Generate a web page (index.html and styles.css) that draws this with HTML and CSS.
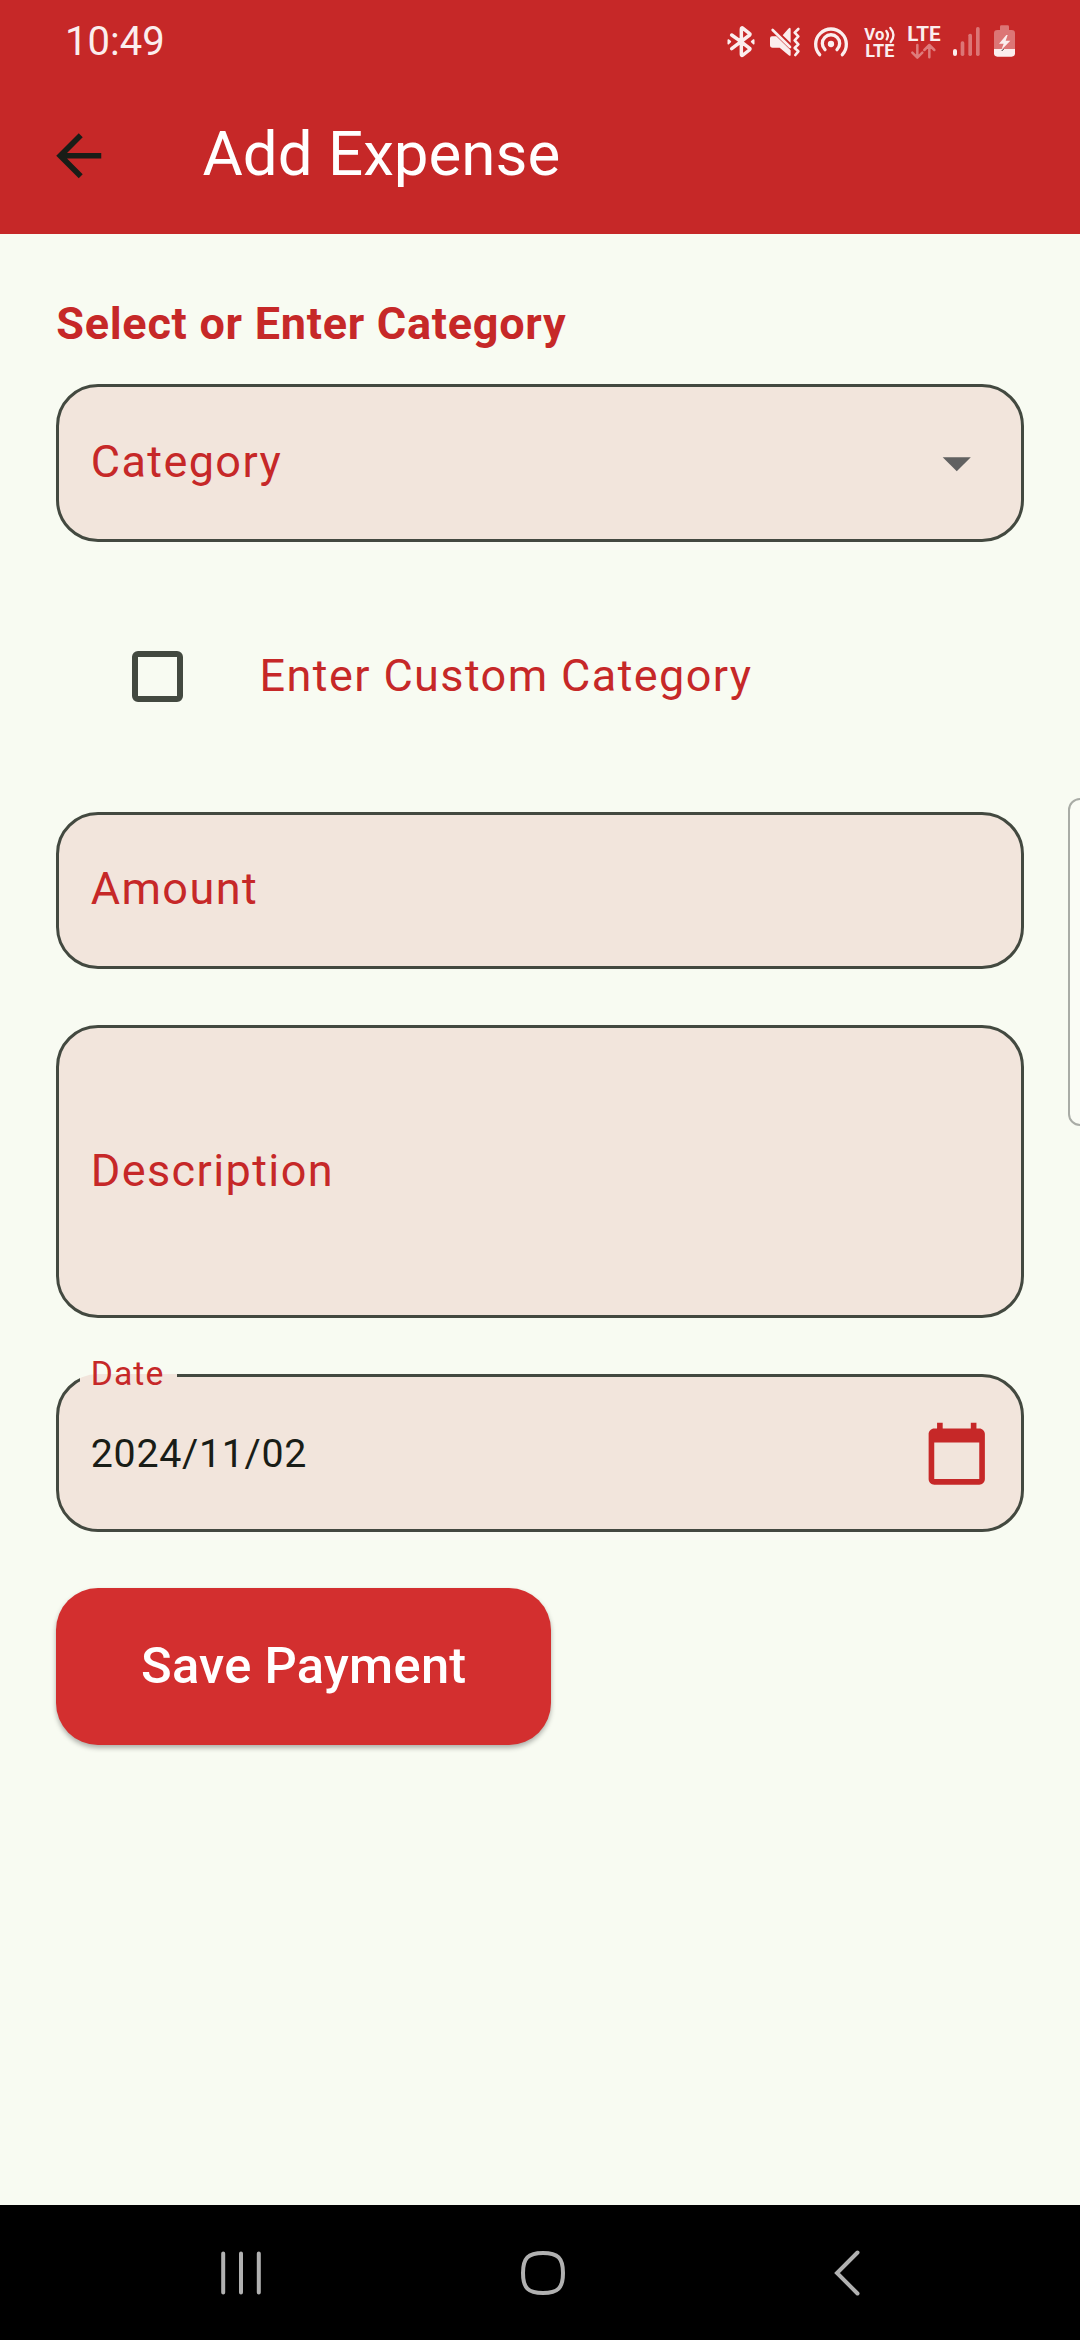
FILE: index.html
```html
<!DOCTYPE html>
<html lang="en">
<head>
<meta charset="utf-8">
<title>Add Expense</title>
<link rel="stylesheet" href="styles.css">
</head>
<body>
<div class="screen">
  <header class="top">
    <div class="status">
      <span class="clock">10:49</span>
      <div class="status-icons">
        <svg width="42" height="65" viewBox="30 0 126 195" fill="none" stroke="#fbeeee" stroke-width="10.500" stroke-linecap="round" stroke-linejoin="round"><path d="M65 75L93 95L65 116M93 95L119 115Q121 117 118 120L99 135Q94 139 94 133V58Q94 51 99 55L118 70Q121 72 119 75Z"/><path d="M55 90L61 95L55 101ZM131 90L125 95L131 101Z" stroke-width="5" fill="#fbeeee"/></svg>
        <svg width="45" height="65" viewBox="156 0 135 195" fill="#fbeeee"><path d="M180 85Q180 79 186 79H199L242 121V134Q242 140 236 136L209 113H188Q180 113 180 105ZM218 76L235 56Q242 49 242 58V99Z"/><path d="M188 60L240 111M265 57L254 68L265 79L254 91L265 103L254 114L265 124L256 135" fill="none" stroke="#fbeeee" stroke-width="8" stroke-linecap="round" stroke-linejoin="round"/></svg>
        <svg width="49" height="65" viewBox="291 0 147 195" fill="none" stroke="#fbeeee" stroke-width="10" stroke-linecap="round"><path d="M329 134A46 46 0 1 1 397 134M345 119A26 26 0 1 1 381 119"/><circle cx="363" cy="102" r="9.500" fill="#fbeeee" stroke="none"/></svg>
        <svg width="45" height="65" viewBox="438 0 135 195"><g class="signal-text"><text x="463" y="90" font-size="51" textLength="60" lengthAdjust="spacingAndGlyphs">Vo</text><text x="466" y="141" font-size="53" textLength="87" lengthAdjust="spacingAndGlyphs">LTE</text></g><path d="M529 63Q538 75 530 88M541 54Q559 75 542 96" fill="none" stroke="#fbeeee" stroke-width="7" stroke-linecap="round"/></svg>
        <svg width="46" height="65" viewBox="573 0 138 195"><text class="signal-text" x="592" y="93" font-size="62" textLength="100" lengthAdjust="spacingAndGlyphs">LTE</text><path d="M622 105V142M607 128L622 143L637 128M658 142V105M643 120L658 105L673 120" fill="none" stroke="#de7c7c" stroke-width="7.500" stroke-linecap="round" stroke-linejoin="round"/></svg>
        <svg width="40" height="65" viewBox="711 0 120 195" fill="#dc7676"><rect x="729" y="117" width="12" height="21" rx="6" fill="#fbeeee"/><rect x="752" y="94" width="11" height="44" rx="5"/><rect x="775" y="71" width="11" height="67" rx="5"/><rect x="798" y="51" width="11" height="87" rx="5"/></svg>
        <svg width="40" height="65" viewBox="831 0 120 195"><path d="M862 60H870V50Q870 46 874 46H893Q897 46 897 50V60H905Q915 60 915 70V118H852V70Q852 60 862 60Z" fill="#dc7676"/><path d="M852 117H915V130Q915 140 905 140H862Q852 140 852 130Z" fill="#fbeeee"/><path d="M889 75L867 101H881L874 120L901 92H887L893 75Z" fill="#fbeeee"/><path d="M881 117L875 123" stroke="#333" stroke-width="3"/></svg>
      </div>
    </div>
    <div class="app-bar">
      <svg class="icon" viewBox="0 0 24 24" fill="#191d17"><path d="M20 11H7.830l5.590-5.590L12 4l-8 8 8 8 1.410-1.410L7.830 13H20z"/></svg>
      <h1 class="title">Add Expense</h1>
    </div>
  </header>

  <main class="form">
    <h2 class="section-title">Select or Enter Category</h2>
    <div class="field">
      <span class="label">Category</span>
      <svg class="icon" viewBox="0 0 24 24" fill="#616161"><path d="M7 10l5 5 5-5z"/></svg>
    </div>
    <div class="check-row">
      <span class="checkbox"></span>
      <span class="label">Enter Custom Category</span>
    </div>
    <div class="field"><span class="label">Amount</span></div>
    <div class="field field-tall"><span class="label">Description</span></div>
    <fieldset class="date-field">
      <legend class="date-label"><span class="date-label-text">Date</span></legend>
      <div class="date-row">
        <span class="date-value">2024/11/02</span>
        <svg class="icon" viewBox="0 0 24 24" fill="#c62828"><path d="M20 3h-1V1h-2v2H7V1H5v2H4c-1.100 0-2 .9-2 2v16c0 1.100.9 2 2 2h16c1.100 0 2-.9 2-2V5c0-1.100-.9-2-2-2zm0 18H4V8h16z"/></svg>
      </div>
    </fieldset>
    <button class="save" type="button">Save Payment</button>
  </main>

  <nav class="nav-bar">
    <svg width="44" height="50" viewBox="0 0 44 50" stroke="#b1b1b1" stroke-width="4" stroke-linecap="round"><path d="M4.200 5.500V44.500M22 5.500V44.500M39.800 5.500V44.500"/></svg>
    <svg class="home" width="50" height="50" viewBox="0 0 50 50" fill="none" stroke="#b1b1b1" stroke-width="4"><path d="M25 5C40 5 45 10 45 25S40 45 25 45 5 40 5 25 10 5 25 5Z"/></svg>
    <svg width="36" height="50" viewBox="0 0 36 50" fill="none" stroke="#b1b1b1" stroke-width="4" stroke-linecap="round"><path d="M25.500 4.500L5 25L25.500 45.500"/></svg>
  </nav>
  <div class="edge-handle"></div>
</div>
</body>
</html>
```
FILE: styles.css
```css
* { box-sizing: border-box; }

body { margin: 0; }

.screen {
  position: relative;
  display: flex;
  flex-direction: column;
  width: 1080px;
  height: 2340px;
  overflow: hidden;
  background: #f8fbf2;
  font-family: Roboto, sans-serif;
}

.top {
  height: 234.4px;
  flex: none;
  background: #c62828;
}

.status {
  display: flex;
  justify-content: space-between;
  height: 78px;
  padding: 10px 53px 0 65px;
}

.clock {
  font-size: 40px;
  line-height: 64px;
  color: #fbeeee;
}

.status-icons { display: flex; }

.signal-text {
  font-family: Roboto, sans-serif;
  font-weight: 700;
  fill: #fbeeee;
}

.app-bar {
  display: flex;
  align-items: center;
  gap: 90px;
  height: 156.4px;
  padding-left: 45px;
}

.icon {
  flex: none;
  width: 67.5px;
  height: 67.5px;
}

.title {
  margin: 0 0 4px;
  font-size: 61.875px;
  line-height: 78px;
  font-weight: 400;
  color: #fff;
}

.form {
  display: flex;
  flex: 1;
  flex-direction: column;
  gap: 56.25px;
  padding: 58px 56.25px 0;
}

.section-title {
  margin: 0 0 -29px;
  font-size: 45px;
  line-height: 64.4px;
  font-weight: 700;
  letter-spacing: 0.73px;
  color: #c62828;
}

.field {
  display: flex;
  flex: none;
  align-items: center;
  justify-content: space-between;
  height: 157.5px;
  padding: 0 30.5px 0 31.5px;
  border: 3px solid #434940;
  border-radius: 42px;
  background: #f2e5dc;
}

.field-tall { height: 292.5px; }

.label {
  font-size: 45px;
  line-height: 64px;
  letter-spacing: 1.4px;
  color: #c62828;
}

.field .label,
.check-row .label { margin-bottom: 2px; }

.check-row {
  display: flex;
  flex: none;
  align-items: center;
  gap: 77px;
  height: 157.5px;
  padding-left: 75.75px;
}

.checkbox {
  width: 50.6px;
  height: 50.6px;
  border: 6px solid #434940;
  border-radius: 6px;
}

.date-field {
  flex: none;
  height: 176px;
  margin: -18.5px 0 0;
  padding: 0 30.5px 0 21px;
  border: 3px solid #434940;
  border-radius: 42px;
  background: #f2e5dc;
}

.date-label {
  padding: 0 12.5px 0 10.5px;
  font-size: 33.75px;
  line-height: 40px;
  letter-spacing: 1.05px;
  color: #c62828;
}

.date-label-text {
  display: block;
  margin: -2px 0 2px;
}

.date-row {
  display: flex;
  align-items: center;
  justify-content: space-between;
  height: 116px;
  padding-left: 10.5px;
}

.date-value {
  font-size: 39.375px;
  letter-spacing: 0.7px;
  color: #191d17;
}

.save {
  flex: none;
  align-self: flex-start;
  width: 495px;
  height: 157.5px;
  padding: 0 0 3px;
  border: 0;
  border-radius: 42px;
  background: #d32f2f;
  box-shadow: 0 3px 5px rgba(0, 0, 0, 0.3);
  font-family: Roboto, sans-serif;
  font-size: 50.625px;
  font-weight: 500;
  letter-spacing: 0.3px;
  color: #fff;
}

.nav-bar {
  display: flex;
  flex: none;
  align-items: center;
  justify-content: space-between;
  height: 135px;
  padding: 0 212.5px 0 219px;
  background: #000;
}

.home { margin-right: 8px; }

.edge-handle {
  position: absolute;
  top: 798px;
  right: -12px;
  width: 24.5px;
  height: 328px;
  border: 2px solid #a9aca6;
  border-radius: 12px;
  background: #fafcf5;
}
```
